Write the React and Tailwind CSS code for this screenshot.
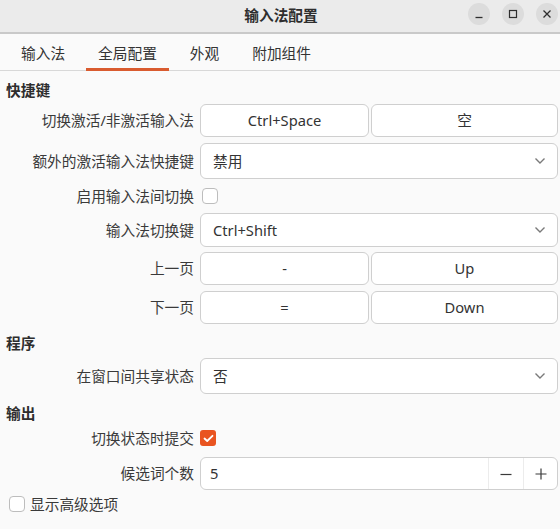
import React from "react";

const font = { fontFamily: '"Noto Sans", "Noto Sans CJK SC", sans-serif' };

function Chevron() {
  return (
    <svg width="12" height="8" viewBox="0 0 12 8" className="shrink-0">
      <path d="M1.5 1.5 L6 6 L10.5 1.5" fill="none" stroke="#7a7a7a" strokeWidth="1.4" />
    </svg>
  );
}

function Label({ children }) {
  return (
    <div className="w-[200px] shrink-0 pr-[6px] text-right text-[#3a3a3a]">{children}</div>
  );
}

function Btn({ children, className = "" }) {
  return (
    <div
      className={
        "h-full flex items-center justify-center rounded-[6px] border border-[#cfcfcf] bg-white text-[#333] " +
        className
      }
    >
      {children}
    </div>
  );
}

function Combo({ value }) {
  return (
    <div className="flex-1 h-full flex items-center justify-between rounded-[6px] border border-[#cfcfcf] bg-white pl-[12px] pr-[11px] text-[#333]">
      <span>{value}</span>
      <Chevron />
    </div>
  );
}

function CheckBox({ checked }) {
  if (checked) {
    return (
      <div className="w-[16px] h-[16px] rounded-[3px] bg-[#e95420] flex items-center justify-center">
        <svg width="11" height="9" viewBox="0 0 11 9">
          <path d="M1.5 4.5 L4.2 7 L9.5 1.8" fill="none" stroke="white" strokeWidth="1.8" strokeLinecap="round" strokeLinejoin="round" />
        </svg>
      </div>
    );
  }
  return <div className="w-[16px] h-[16px] rounded-[4px] border border-[#bdbdbd] bg-white" />;
}

export default function App() {
  return (
    <div className="w-[560px] h-[529px] bg-[#fafafa] flex flex-col overflow-hidden text-[14.7px]" style={font}>
      {/* Title bar */}
      <div className="h-[34px] shrink-0 bg-[#ebebeb] border-b-2 border-[#c9c9c9] flex items-center relative">
        <div className="flex-1 text-center font-bold text-[#2e2e2e] pl-[2px] -mt-[2px]">输入法配置</div>
        <div className="absolute right-[2px] top-[3px] flex gap-[12px]">
          <div className="w-[22px] h-[22px] rounded-full bg-[#dcdcdc] flex items-center justify-center">
            <svg width="10" height="10" viewBox="0 0 10 10">
              <path d="M1.5 8.5 H8.5" stroke="#2e2e2e" strokeWidth="1.3" />
            </svg>
          </div>
          <div className="w-[22px] h-[22px] rounded-full bg-[#dcdcdc] flex items-center justify-center">
            <svg width="10" height="10" viewBox="0 0 10 10">
              <rect x="1.5" y="1.5" width="7" height="7" fill="none" stroke="#2e2e2e" strokeWidth="1.2" />
            </svg>
          </div>
          <div className="w-[22px] h-[22px] rounded-full bg-[#dcdcdc] flex items-center justify-center">
            <svg width="10" height="10" viewBox="0 0 10 10">
              <path d="M1.5 1.5 L8.5 8.5 M8.5 1.5 L1.5 8.5" stroke="#2e2e2e" strokeWidth="1.3" />
            </svg>
          </div>
        </div>
      </div>

      {/* Tabs */}
      <div className="h-[37px] shrink-0 flex border-b border-[#d8d8d8] pl-[9px] gap-[9px] text-[#333]">
        <div className="h-[37px] -mb-px pt-[5px] px-[12px] flex items-center border-b-[3px] border-transparent">输入法</div>
        <div className="h-[37px] -mb-px pt-[5px] px-[12px] flex items-center border-b-[3px] border-[#d95b2f]">全局配置</div>
        <div className="h-[37px] -mb-px pt-[5px] px-[12px] flex items-center border-b-[3px] border-transparent">外观</div>
        <div className="h-[37px] -mb-px pt-[5px] px-[12px] flex items-center border-b-[3px] border-transparent">附加组件</div>
      </div>

      {/* Content */}
      <div className="flex flex-col pt-[9px] pr-[2px]">
        <div className="h-[20px] leading-[20px] pl-[6px] font-bold text-[#2e2e2e]">快捷键</div>

        <div className="mt-[4px] h-[33px] flex items-center">
          <Label>切换激活/非激活输入法</Label>
          <div className="flex-1 h-full flex gap-[2px]">
            <Btn className="w-[169px]">Ctrl+Space</Btn>
            <Btn className="flex-1">空</Btn>
          </div>
        </div>

        <div className="mt-[6px] h-[36px] flex items-center">
          <Label>额外的激活输入法快捷键</Label>
          <Combo value="禁用" />
        </div>

        <div className="mt-[6px] h-[22px] flex items-center">
          <Label>启用输入法间切换</Label>
          <div className="pl-[2px]">
            <CheckBox />
          </div>
        </div>

        <div className="mt-[6px] h-[34px] flex items-center">
          <Label>输入法切换键</Label>
          <Combo value="Ctrl+Shift" />
        </div>

        <div className="mt-[5px] h-[33px] flex items-center">
          <Label>上一页</Label>
          <div className="flex-1 h-full flex gap-[2px]">
            <Btn className="w-[169px]">-</Btn>
            <Btn className="flex-1">Up</Btn>
          </div>
        </div>

        <div className="mt-[6px] h-[33px] flex items-center">
          <Label>下一页</Label>
          <div className="flex-1 h-full flex gap-[2px]">
            <Btn className="w-[169px]">=</Btn>
            <Btn className="flex-1">Down</Btn>
          </div>
        </div>

        <div className="mt-[9px] h-[20px] leading-[20px] pl-[6px] font-bold text-[#2e2e2e]">程序</div>

        <div className="mt-[5px] h-[36px] flex items-center">
          <Label>在窗口间共享状态</Label>
          <Combo value="否" />
        </div>

        <div className="mt-[9px] h-[20px] leading-[20px] pl-[6px] font-bold text-[#2e2e2e]">输出</div>

        <div className="mt-[4px] h-[22px] flex items-center">
          <Label>切换状态时提交</Label>
          <CheckBox checked />
        </div>

        <div className="mt-[8px] h-[33px] flex items-center">
          <Label>候选词个数</Label>
          <div className="flex-1 h-full flex rounded-[6px] border border-[#cfcfcf] bg-white text-[#333]">
            <div className="flex-1 flex items-center pl-[9px]">5</div>
            <div className="w-[35px] flex items-center justify-center border-l border-[#ececec]">
              <svg width="14" height="14" viewBox="0 0 14 14">
                <path d="M1.5 7.5 H12.5" stroke="#3a3a3a" strokeWidth="1.2" />
              </svg>
            </div>
            <div className="w-[34px] flex items-center justify-center border-l border-[#ececec]">
              <svg width="14" height="14" viewBox="0 0 14 14">
                <path d="M1.5 7 H12.5 M7 1.5 V12.5" stroke="#3a3a3a" strokeWidth="1.2" />
              </svg>
            </div>
          </div>
        </div>

        <div className="mt-[3px] h-[22px] flex items-center pl-[9px] gap-[5px] text-[#3a3a3a]">
          <CheckBox />
          <span>显示高级选项</span>
        </div>
      </div>
    </div>
  );
}
